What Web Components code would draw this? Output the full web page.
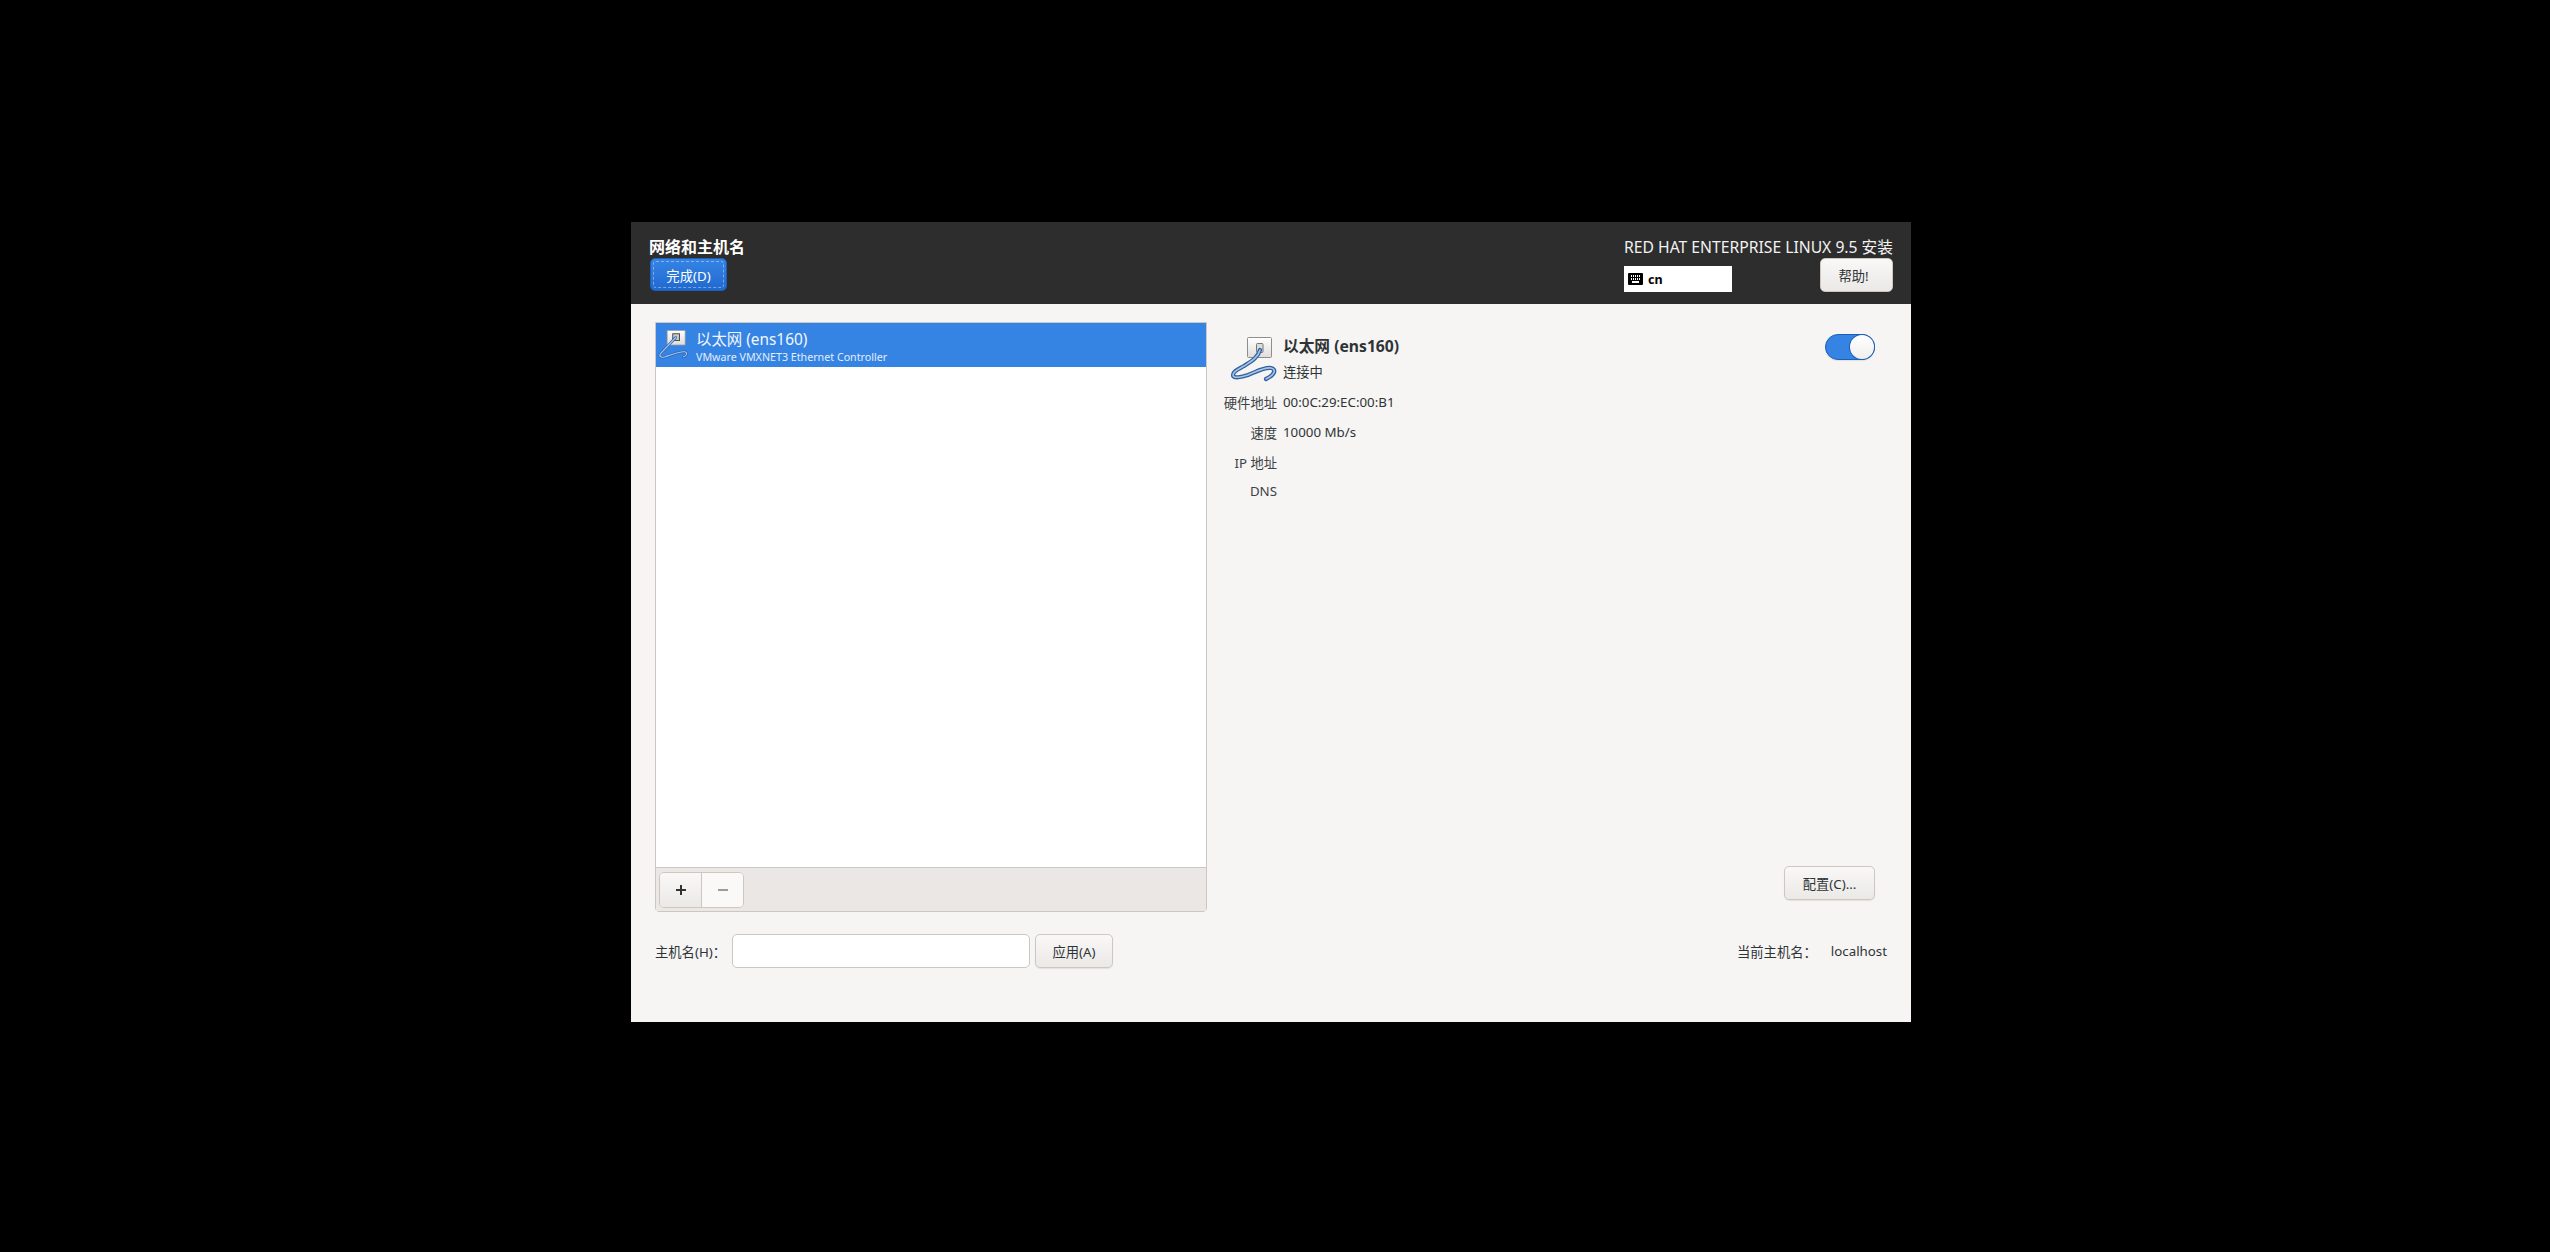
<!DOCTYPE html>
<html lang="zh">
<head>
<meta charset="utf-8">
<title>网络和主机名</title>
<style>
  html, body { margin: 0; height: 100%; background: #000; }
  body {
    padding: 222px 0 0 631px;
    box-sizing: border-box;
    overflow: hidden;
    font-family: "Noto Sans", "Noto Sans CJK SC", sans-serif;
    font-size: 13.3px;
    color: #2e3436;
  }
</style>
</head>
<body>
<network-spoke></network-spoke>
<script>
class PushButton extends HTMLElement {
  constructor() {
    super();
    this.attachShadow({ mode: "open" });
    this.shadowRoot.innerHTML = `
    <style>
      :host {
        display: inline-flex;
        box-sizing: border-box;
        align-items: center;
        justify-content: center;
        height: 34px;
        border: 1px solid #cdc7c2;
        border-radius: 5px;
        background: linear-gradient(#f9f8f7, #ebe9e6);
        box-shadow: 0 1px 1px rgba(0, 0, 0, 0.08);
        color: #2e3436;
        font-size: 13.3px;
      }
      :host([suggested]) {
        height: 33px;
        padding-top: 1px;
        border-color: #1b5fb8;
        background: linear-gradient(#3584e4, #2069cf);
        box-shadow: none;
        color: #fff;
        position: relative;
      }
      :host([suggested])::after {
        content: "";
        position: absolute;
        inset: 2px;
        border: 1px dashed rgba(255, 255, 255, 0.4);
        border-radius: 3px;
      }
    </style>
    <slot></slot>`;
  }
}
customElements.define("push-button", PushButton);

class ToggleSwitch extends HTMLElement {
  constructor() {
    super();
    this.attachShadow({ mode: "open" });
    this.shadowRoot.innerHTML = `
    <style>
      :host {
        display: flex;
        justify-content: flex-end;
        box-sizing: border-box;
        width: 50px;
        height: 26px;
        border: 1px solid #1b5fb8;
        border-radius: 13px;
        background: #3584e4;
        box-shadow: 0 1px 1px rgba(0, 0, 0, 0.08);
      }
      .knob {
        width: 24px;
        height: 24px;
        border-radius: 50%;
        background: linear-gradient(#fff, #f1efed);
        box-shadow: 0 0 0 1px #1b5fb8;
      }
    </style>
    <div class="knob"></div>`;
  }
}
customElements.define("toggle-switch", ToggleSwitch);

class NetIcon extends HTMLElement {
  constructor() {
    super();
    this.attachShadow({ mode: "open" });
    const small = this.hasAttribute("small");
    const cable = small
      ? "M29 14 L9 35 C6 39 9 41 14 40 C22 38 34 32 41 33 C45 34 44 38 39 40"
      : "M30 16 C28 24 20 28 14 32 C9 35 3 37 3 41 C3 45 12 43 18 41 C26 38 34 33 41 34 C46 35 46 40 36 45";
    this.shadowRoot.innerHTML = `
    <style>
      :host { display: block; flex: none; width: ${small ? 36 : 48}px; height: ${small ? 36 : 48}px; }
      svg { display: block; width: 100%; height: 100%; overflow: visible; }
    </style>
    <svg viewBox="0 0 48 48" fill="none">
      <defs>
        <linearGradient id="plate" x1="0" y1="0" x2="0" y2="1">
          <stop offset="0" stop-color="#ffffff"/>
          <stop offset="1" stop-color="#dedddb"/>
        </linearGradient>
      </defs>
      ${small
        ? `<rect x="17.500" y="4.500" width="24" height="19.500" fill="url(#plate)" stroke="#9a9a98"/>
           <rect x="25" y="9" width="9" height="9" fill="#c9c9c6" stroke="#4a4a4a" stroke-width="1.300"/>
           <path d="${cable}" stroke="#2a62b0" stroke-width="3.400" stroke-linecap="round"/>
           <path d="${cable}" stroke="#a9c8f0" stroke-width="1.500" stroke-linecap="round"/>`
        : `<rect x="17.500" y="3.500" width="24" height="20" rx="1" fill="url(#plate)" stroke="#8e8e8b"/>
           <rect x="26.500" y="9.500" width="6.500" height="9" rx="1" fill="#dcdbd8" stroke="#77777a"/>
           <path d="${cable}" stroke="#31609f" stroke-width="4.200" stroke-linecap="round"/>
           <path d="${cable}" stroke="#a9c4e6" stroke-width="1.600" stroke-linecap="round"/>`}
    </svg>`;
  }
}
customElements.define("net-icon", NetIcon);

class SpokeHeader extends HTMLElement {
  constructor() {
    super();
    this.attachShadow({ mode: "open" });
    this.shadowRoot.innerHTML = `
    <style>
      :host {
        display: flex;
        justify-content: space-between;
        box-sizing: border-box;
        height: 82px;
        padding: 14px 18px 0 19px;
        background: #2d2d2d;
        color: #fff;
      }
      .left, .right { display: flex; flex-direction: column; }
      .title { font-size: 16px; font-weight: 700; line-height: 22px; margin-left: -1px; }
      .done { width: 77px; }
      .product { font-size: 15.7px; line-height: 22px; color: #f2f2f2; white-space: nowrap; }
      .tools { display: flex; justify-content: space-between; }
      .kb {
        display: flex;
        align-items: center;
        gap: 5px;
        box-sizing: border-box;
        width: 108px;
        height: 26px;
        margin-top: 8px;
        padding-left: 4px;
        background: #fff;
        color: #000;
        font-size: 12.5px;
        font-weight: 700;
      }
      .kb svg { width: 15px; height: 12px; }
      .help { width: 73px; padding-right: 6px; }
    </style>
    <div class="left">
      <div class="title">网络和主机名</div>
      <push-button class="done" suggested>完成(D)</push-button>
    </div>
    <div class="right">
      <div class="product">RED HAT ENTERPRISE LINUX 9.5 安装</div>
      <div class="tools">
        <div class="kb">
          <svg viewBox="0 0 15 12"><path fill-rule="evenodd" d="M1 0h13a1 1 0 0 1 1 1v10a1 1 0 0 1-1 1H1a1 1 0 0 1-1-1V1a1 1 0 0 1 1-1zm2 2v2h1V2zm2 0v2h1V2zm2 0v2h1V2zm2 0v2h1V2zm2 0v2h1V2zM3 5v2h1V5zm2 0v2h1V5zm2 0v2h1V5zm2 0v2h1V5zm2 0v2h1V5zM4 8v2h7V8z"/></svg>
          <span>cn</span>
        </div>
        <push-button class="help">帮助!</push-button>
      </div>
    </div>`;
  }
}
customElements.define("spoke-header", SpokeHeader);

class DeviceList extends HTMLElement {
  constructor() {
    super();
    this.attachShadow({ mode: "open" });
    this.shadowRoot.innerHTML = `
    <style>
      :host {
        display: flex;
        flex-direction: column;
        box-sizing: border-box;
        width: 552px;
        border: 1px solid #cdc7c2;
        border-radius: 0 0 4px 4px;
        background: #fff;
      }
      .row {
        display: flex;
        align-items: center;
        gap: 6px;
        height: 44px;
        background: #3584e4;
        color: #fff;
      }
      .row net-icon { margin-left: -2px; }
      .text { padding-top: 4px; }
      .name { font-size: 15.4px; line-height: 20px; color: #f1f6fd; }
      .sub { font-size: 10.7px; line-height: 14px; color: #e3edfb; }
      .fill { flex: 1; }
      .bar {
        display: flex;
        align-items: center;
        box-sizing: border-box;
        height: 44px;
        padding-left: 3px;
        border-top: 1px solid #cdc7c2;
        background: #eae7e4;
      }
      .btns { display: flex; height: 36px; border: 1px solid #cdc7c2; border-radius: 5px; box-sizing: border-box; overflow: hidden; }
      .btns div { display: flex; align-items: center; justify-content: center; width: 41px; }
      .add { background: linear-gradient(#f9f8f7, #ebe9e6); border-right: 1px solid #cdc7c2; }
      .remove { background: #faf9f8; }
      svg { width: 12px; height: 12px; }
    </style>
    <div class="row">
      <net-icon small></net-icon>
      <div class="text">
        <div class="name">以太网 (ens160)</div>
        <div class="sub">VMware VMXNET3 Ethernet Controller</div>
      </div>
    </div>
    <div class="fill"></div>
    <div class="bar">
      <div class="btns">
        <div class="add"><svg viewBox="0 0 12 12"><path d="M1 6h10M6 1v10" stroke="#2e3436" stroke-width="2"/></svg></div>
        <div class="remove"><svg viewBox="0 0 12 12"><path d="M1 6h10" stroke="#9a9d9b" stroke-width="2"/></svg></div>
      </div>
    </div>`;
  }
}
customElements.define("device-list", DeviceList);

class DeviceDetails extends HTMLElement {
  constructor() {
    super();
    this.attachShadow({ mode: "open" });
    this.shadowRoot.innerHTML = `
    <style>
      :host {
        display: flex;
        flex-direction: column;
        flex: 1;
        box-sizing: border-box;
        padding: 12px 12px 12px 23px;
      }
      .top { display: flex; align-items: flex-start; justify-content: space-between; }
      .device { display: grid; grid-template-columns: 47px auto; column-gap: 6px; }
      .title { display: flex; flex-direction: column; }
      .name { font-size: 15.7px; font-weight: 700; line-height: 24px; color: #2e3436; }
      .state { line-height: 24px; margin-top: 2px; }
      .props {
        display: grid;
        grid-template-columns: 47px auto;
        column-gap: 6px;
        grid-auto-rows: 30px;
        align-items: center;
        margin-top: 3px;
        white-space: nowrap;
      }
      .props span:nth-child(odd) { justify-self: end; color: #3d4244; }
      .props .dns { margin-top: -2px; }
      .grow { flex: 1; }
      .actions { display: flex; justify-content: flex-end; }
      .cfg { width: 91px; }
    </style>
    <div class="top">
      <div class="device">
        <net-icon></net-icon>
        <div class="title">
          <div class="name">以太网 (ens160)</div>
          <div class="state">连接中</div>
        </div>
      </div>
      <toggle-switch></toggle-switch>
    </div>
    <div class="props">
      <span>硬件地址</span><span>00:0C:29:EC:00:B1</span>
      <span>速度</span><span>10000 Mb/s</span>
      <span>IP 地址</span><span></span>
      <span class="dns">DNS</span><span></span>
    </div>
    <div class="grow"></div>
    <div class="actions"><push-button class="cfg">配置(C)...</push-button></div>`;
  }
}
customElements.define("device-details", DeviceDetails);

class HostnameBar extends HTMLElement {
  constructor() {
    super();
    this.attachShadow({ mode: "open" });
    this.shadowRoot.innerHTML = `
    <style>
      :host {
        display: flex;
        align-items: center;
        height: 34px;
        margin-top: 22px;
        white-space: nowrap;
      }
      label { width: 77px; }
      .entry {
        box-sizing: border-box;
        width: 298px;
        height: 34px;
        border: 1px solid #cdc7c2;
        border-radius: 5px;
        background: #fff;
      }
      .apply { width: 78px; margin-left: 5px; }
      .grow { flex: 1; }
      .current { margin-right: 14px; }
    </style>
    <label>主机名(H)：</label>
    <div class="entry"></div>
    <push-button class="apply">应用(A)</push-button>
    <div class="grow"></div>
    <span class="current">当前主机名：</span>
    <span>localhost</span>`;
  }
}
customElements.define("hostname-bar", HostnameBar);

class NetworkSpoke extends HTMLElement {
  constructor() {
    super();
    this.attachShadow({ mode: "open" });
    this.shadowRoot.innerHTML = `
    <style>
      :host {
        display: flex;
        flex-direction: column;
        width: 1280px;
        height: 800px;
        background: #f6f5f4;
      }
      .body { padding: 18px 24px 0; }
      .main { display: flex; height: 590px; }
    </style>
    <spoke-header></spoke-header>
    <div class="body">
      <div class="main">
        <device-list></device-list>
        <device-details></device-details>
      </div>
      <hostname-bar></hostname-bar>
    </div>`;
  }
}
customElements.define("network-spoke", NetworkSpoke);
</script>
</body>
</html>
